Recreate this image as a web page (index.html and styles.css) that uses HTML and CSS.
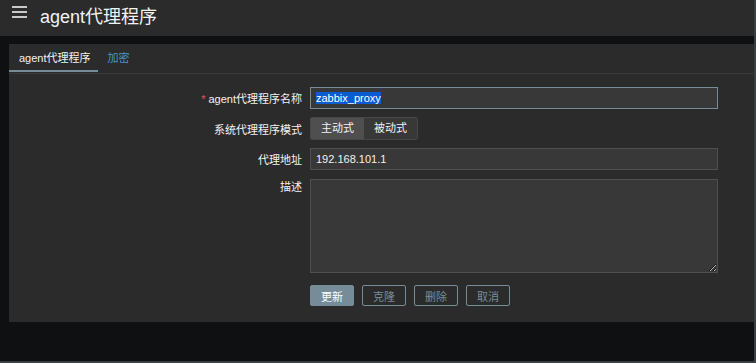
FILE: index.html
```html
<!DOCTYPE html>
<html lang="zh-CN">
<head>
  <meta charset="UTF-8" />
  <meta name="viewport" content="width=device-width, initial-scale=1" />
  <title>agent代理程序</title>
  <link rel="stylesheet" href="styles.css">
</head>
<body>
  <div class="page">
    <!-- Header -->
    <header class="header">
      <span class="burger"><i></i><i></i><i></i></span>
      <h1 class="title">agent代理程序</h1>
    </header>

    <!-- Form panel -->
    <main class="panel">
      <nav class="tabs">
        <a class="tab active">agent代理程序</a>
        <a class="tab">加密</a>
      </nav>

      <form class="form">
        <label class="lbl"><span class="req">*</span> agent代理程序名称</label>
        <div class="field focus"><span class="sel">zabbix_proxy</span></div>

        <label class="lbl">系统代理程序模式</label>
        <div class="seg">
          <span class="seg-item on">主动式</span>
          <span class="seg-item">被动式</span>
        </div>

        <label class="lbl">代理地址</label>
        <div class="field">192.168.101.1</div>

        <label class="lbl top">描述</label>
        <textarea class="area"></textarea>

        <div></div>
        <div class="actions">
          <button type="button" class="btn main">更新</button>
          <button type="button" class="btn alt">克隆</button>
          <button type="button" class="btn alt">删除</button>
          <button type="button" class="btn alt">取消</button>
        </div>
      </form>
    </main>
  </div>
</body>
</html>
```

FILE: styles.css
```css
html {
  background: #3a3e42;
}
body {
  margin: 0;
  font-family: Arial, "Liberation Sans", "Noto Sans CJK SC", sans-serif;
  font-size: 11px;
  color: #f2f2f2;
}
.page {
  width: 754px;
  height: 361px;
  background: #0f1012;
  overflow: hidden;
}

/* --- Header --- */
.header {
  height: 36px;
  background: #2b2b2b;
  display: flex;
  align-items: center;
}
.burger {
  width: 15px;
  margin: 0 13px 0 12px;
  display: flex; flex-direction: column;
  gap: 3px;
  position: relative; top: -6px;
}
.burger i {
  display: block;
  height: 2px;
  background: #c9c9c9;
}
.title {
  margin: 0;
  font-size: 18px;
  font-weight: normal;
  position: relative; top: -3px;
}

/* --- Panel --- */
.panel {
  margin: 8px 0 0 9px;
  background: #2b2b2b;
  padding-bottom: 16px;
}
.tabs {
  display: flex;
  height: 29px;
  border-bottom: 1px solid #383838;
}
.tab {
  padding: 0 7px 0 10px;
  line-height: 28px;
  color: #4796c4;
  cursor: pointer;
}
.tab.active {
  color: #f2f2f2;
  border-bottom: 2px solid #768d99;
  height: 28px;
  margin-bottom: -1px;
  box-sizing: border-box;
}

.form {
  display: grid;
  grid-template-columns: 293px 408px;
  column-gap: 8px;
  row-gap: 8px;
  padding-top: 13px;
  align-items: center;
}
.lbl {
  text-align: right;
  white-space: nowrap;
}
.lbl.top { align-self: start; }
.req { color: #e45959; }

.field {
  height: 22px;
  box-sizing: border-box;
  background: #383838;
  border: 1px solid #4f4f4f;
  padding: 0 5px;
  line-height: 20px;
}
.field.focus { border-color: #768d99; }
.sel {
  background: #0b5cd0;
  color: #fff;
}

.seg {
  display: flex;
  width: 108px;
  height: 23px;
  border: 1px solid #474747;
  box-sizing: border-box;
  border-radius: 2px;
  overflow: hidden;
}
.seg-item {
  flex: 1;
  text-align: center;
  line-height: 21px;
  background: #383838;
}
.seg-item.on { background: #4f4f4f; }

.area {
  height: 94px;
  box-sizing: border-box;
  background: #383838;
  border: 1px solid #4f4f4f;
  color: #f2f2f2;
  margin: 0;
  margin-top: 1px;
  resize: both;
}

.actions {
  display: flex;
  gap: 8px;
  margin-top: 4px;
}
.btn {
  width: 44px;
  height: 21px;
  padding: 0;
  font: inherit;
  border-radius: 2px;
  border: 1px solid #768d99;
  cursor: pointer;
}
.btn.main {
  background: #768d99;
  color: #fff;
}
.btn.alt {
  background: transparent;
  color: #768d99;
}
```
